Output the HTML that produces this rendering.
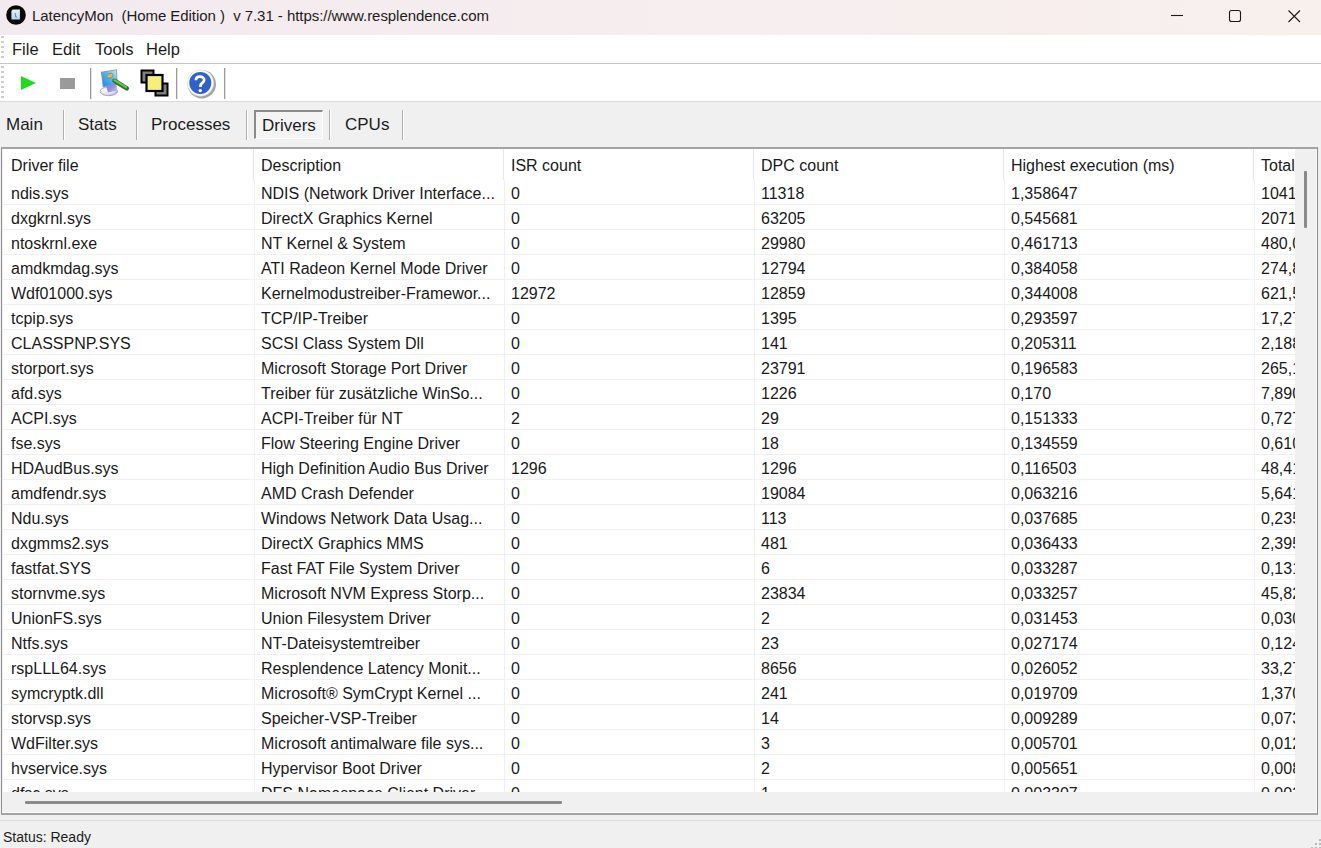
<!DOCTYPE html>
<html><head><meta charset="utf-8">
<style>
*{box-sizing:border-box}
html,body{margin:0;padding:0}
body{width:1321px;height:848px;overflow:hidden;position:relative;background:#f0f0f0;font-family:"Liberation Sans",sans-serif;color:#1a1a1a}
.abs{position:absolute}
#title{position:absolute;left:0;top:0;width:1321px;height:35px;background:linear-gradient(90deg,#f3eaf0 0%,#f6edef 45%,#f8f0ed 100%)}
#title .t{position:absolute;left:32px;top:6px;font-size:15px;line-height:20px;white-space:pre;color:#1c1c1c;letter-spacing:-0.05px}
#menu{position:absolute;left:0;top:35px;width:1321px;height:28px;background:#fff}
#menu span{position:absolute;top:4px;font-size:16.5px;line-height:20px;color:#1c1c1c}
#menuline{position:absolute;left:0;top:63px;width:1321px;height:1px;background:#c6c6c6}
#tool{position:absolute;left:0;top:64px;width:1321px;height:37px;background:#fff}
#toolline{position:absolute;left:0;top:101px;width:1321px;height:1px;background:#dadada}
.grip{position:absolute;left:1px;width:3px;height:2px;background:#cccccc}
.tsep{position:absolute;top:68px;width:2px;height:31px;background:#9c9c9c;border-right:1px solid #e0e0e0}
.tab{position:absolute;top:114px;font-size:17px;line-height:22px;color:#1c1c1c}
.tabsep{position:absolute;top:110px;width:2px;height:30px;background:#b0b0b0;border-right:1px solid #fff}
#frame{position:absolute;left:1px;top:147px;width:1317px;height:668px;border-left:1px solid #909090;border-top:2px solid #a4a4a4;border-right:1px solid #8c8c8c;border-bottom:2px solid #a4a4a8;background:#f0f0f0;box-shadow:inset -1px -1px 0 #fafafa}
#content{position:absolute;left:3px;top:149px;width:1292px;height:643px;overflow:hidden;background:#fff}
.hdr{position:absolute;left:0;top:0;width:1500px;height:31px}
.hc{position:absolute;top:4px;height:25px;padding-left:8px;font-size:16px;line-height:25px;white-space:pre}
.hsep{position:absolute;top:0;width:1px;height:31px;background:#e6e6e6}
.row{position:absolute;left:0;width:1500px;height:25px;border-bottom:1px solid #f0f0f0}
.c{position:absolute;top:2px;padding-left:8px;font-size:16px;line-height:24px;white-space:pre}
.csep{position:absolute;top:31px;width:1px;height:700px;background:#f0f0f0}
#vscroll{position:absolute;left:1295px;top:149px;width:21px;height:643px;background:#f0f0f0}
#vthumb{position:absolute;left:1304px;top:171px;width:3px;height:57px;background:#8a8a8a;border-radius:1px}
#hscroll{position:absolute;left:3px;top:792px;width:1313px;height:20px;background:#f0f0f0}
#hthumb{position:absolute;left:25px;top:801px;width:537px;height:3px;background:#8a8a8a;border-radius:1px}
#statline{position:absolute;left:0;top:820px;width:1321px;height:1px;background:#dcdcdc}
#status{position:absolute;left:3px;top:828px;font-size:14px;line-height:18px;color:#1c1c1c}
</style></head><body>
<div id="title">
  <svg class="abs" style="left:6px;top:5px" width="20" height="20" viewBox="0 0 20 20">
    <defs><linearGradient id="doc" x1="0" y1="0" x2="0" y2="1"><stop offset="0" stop-color="#e4f2f8"/><stop offset="1" stop-color="#b4d4ec"/></linearGradient></defs>
    <circle cx="10" cy="10" r="9.8" fill="#080808"/>
    <path d="M6.6 4.6 L13.9 4.6 L13.9 14.5 L5.4 14.5 L5.4 5.9 Z" fill="url(#doc)"/>
    <path d="M9.2 8 L9.6 11.8 L11 12" stroke="#4a5a6a" stroke-width="0.7" fill="none"/>
  </svg>
  <div class="t">LatencyMon  (Home Edition )  v 7.31 - https://www.resplendence.com</div>
  <svg class="abs" style="left:1160px;top:0" width="161" height="35" viewBox="0 0 161 35">
    <path d="M11 15.5 H23" stroke="#1a1a1a" stroke-width="1.1"/>
    <rect x="69.5" y="10.5" width="11" height="11" rx="2" ry="2" fill="none" stroke="#1a1a1a" stroke-width="1.1"/>
    <path d="M128.5 10.5 L140 22 M140 10.5 L128.5 22" stroke="#1a1a1a" stroke-width="1.1"/>
  </svg>
</div>
<div id="menu">
  <span style="left:12px">File</span>
  <span style="left:52px">Edit</span>
  <span style="left:95px">Tools</span>
  <span style="left:146px">Help</span>
</div>
<div id="menuline"></div>
<div id="tool"></div>
<div id="toolline"></div>
<!-- grips -->
<div class="grip" style="top:36px"></div><div class="grip" style="top:41px"></div><div class="grip" style="top:46px"></div><div class="grip" style="top:51px"></div><div class="grip" style="top:56px"></div>
<div class="grip" style="top:66px"></div><div class="grip" style="top:71px"></div><div class="grip" style="top:76px"></div><div class="grip" style="top:81px"></div><div class="grip" style="top:86px"></div><div class="grip" style="top:91px"></div><div class="grip" style="top:96px"></div>
<!-- toolbar icons -->
<svg class="abs" style="left:20px;top:75px" width="17" height="16" viewBox="0 0 17 16"><path d="M1 1 L16 8 L1 15 Z" fill="#20dc20"/></svg>
<div class="abs" style="left:60px;top:78px;width:15px;height:11px;background:#9a9a9a"></div>
<div class="tsep" style="left:90px"></div>
<svg class="abs" style="left:96px;top:64px" width="36" height="36" viewBox="0 0 36 36">
  <defs>
    <linearGradient id="scr" x1="0" y1="1" x2="1" y2="0"><stop offset="0" stop-color="#1e88e0"/><stop offset="0.55" stop-color="#56b4f0"/><stop offset="1" stop-color="#c8e6f8"/></linearGradient>
    <radialGradient id="base" cx="0.35" cy="0.35" r="0.75"><stop offset="0" stop-color="#ffffff"/><stop offset="0.6" stop-color="#e4e0f4"/><stop offset="1" stop-color="#b0acc8"/></radialGradient>
    <linearGradient id="neck" x1="0" y1="0" x2="1" y2="1"><stop offset="0" stop-color="#6a8ee0"/><stop offset="0.5" stop-color="#9a88dc"/><stop offset="1" stop-color="#c8c0ec"/></linearGradient>
    <linearGradient id="pen" x1="0" y1="0" x2="0" y2="1"><stop offset="0" stop-color="#7ccc5c"/><stop offset="1" stop-color="#2a7a2a"/></linearGradient>
  </defs>
  <ellipse cx="12.8" cy="27.3" rx="8.7" ry="4.4" fill="url(#base)" stroke="#9c9cb4" stroke-width="0.8"/>
  <path d="M9.5 20.5 L20.5 19 L20.8 26.5 L12 28.5 Z" fill="url(#neck)"/>
  <path d="M4.8 7.8 L21 5.2 L21.6 20.6 L6.8 23.2 Z" fill="#7c98c4"/>
  <path d="M5.8 8.6 L20.2 6.2 L20.7 19.8 L7.6 22.2 Z" fill="url(#scr)"/>
  <ellipse cx="13.9" cy="11.8" rx="3.4" ry="2.2" transform="rotate(-22 13.9 11.8)" fill="#dcbc50" stroke="#6a6040" stroke-width="0.5"/>
  <path d="M18.5 16.8 L30.8 24.4" stroke="#2a7a2a" stroke-width="4.6" stroke-linecap="round"/>
  <path d="M18.6 16.2 L30 23.2" stroke="#6cc050" stroke-width="2" stroke-linecap="round"/>
</svg>
<svg class="abs" style="left:140px;top:69px" width="30" height="29" viewBox="0 0 30 29">
  <rect x="1.5" y="1.5" width="12" height="12" fill="#808080" stroke="#000" stroke-width="2"/>
  <rect x="15.5" y="14.5" width="12" height="12" fill="#808080" stroke="#000" stroke-width="2"/>
  <rect x="6.5" y="6" width="16" height="16" fill="#f4f07a" stroke="#000" stroke-width="2.2"/>
</svg>
<div class="tsep" style="left:176px"></div>
<svg class="abs" style="left:182px;top:64px" width="36" height="36" viewBox="0 0 36 36">
  <circle cx="19.8" cy="20.2" r="14.2" fill="#7c7c7c" opacity="0.7"/>
  <circle cx="18.5" cy="19" r="13.2" fill="#fbfbff" stroke="#d4d8e4" stroke-width="0.6"/>
  <circle cx="18.3" cy="18.9" r="11" fill="#2f62c6"/>
  <path d="M13.9 16.2 C13.9 13.9 15.7 12.7 18 12.7 C20.6 12.7 22.2 14.3 22.2 16.1 C22.2 18.5 18.8 19.1 18.5 21.4 L18.5 22.9" fill="none" stroke="#fff" stroke-width="2.7"/>
  <circle cx="18.3" cy="26.6" r="1.7" fill="#fff"/>
</svg>
<div class="tsep" style="left:224px"></div>
<!-- tabs -->
<span class="tab" style="left:6px">Main</span>
<div class="tabsep" style="left:63px"></div>
<span class="tab" style="left:78px">Stats</span>
<div class="tabsep" style="left:136px"></div>
<span class="tab" style="left:151px">Processes</span>
<div class="tabsep" style="left:246px"></div>
<div class="abs" style="left:254px;top:110px;width:69px;height:29px;border-top:2px solid #8a8a8a;border-left:2px solid #8a8a8a;border-right:1px solid #fff;border-bottom:1px solid #fff;background:#f4f4f4"></div>
<span class="tab" style="left:262px;top:115px">Drivers</span>
<div class="tabsep" style="left:329px"></div>
<span class="tab" style="left:345px">CPUs</span>
<div class="tabsep" style="left:402px"></div>
<!-- frame -->
<div id="frame"></div>
<div id="content">
<div class="hdr">
<div class="hc" style="left:0px">Driver file</div>
<div class="hc" style="left:250px">Description</div>
<div class="hc" style="left:500px">ISR count</div>
<div class="hc" style="left:750px">DPC count</div>
<div class="hc" style="left:1000px">Highest execution (ms)</div>
<div class="hc" style="left:1250px">Total execution (ms)</div>
<div class="hsep" style="left:250px"></div>
<div class="hsep" style="left:500px"></div>
<div class="hsep" style="left:750px"></div>
<div class="hsep" style="left:1000px"></div>
<div class="hsep" style="left:1250px"></div>
</div>
<div class="row" style="top:31px">
<div class="c" style="left:0px">ndis.sys</div>
<div class="c" style="left:250px">NDIS (Network Driver Interface...</div>
<div class="c" style="left:500px">0</div>
<div class="c" style="left:750px">11318</div>
<div class="c" style="left:1000px">1,358647</div>
<div class="c" style="left:1250px">1041,337</div>
</div>
<div class="row" style="top:56px">
<div class="c" style="left:0px">dxgkrnl.sys</div>
<div class="c" style="left:250px">DirectX Graphics Kernel</div>
<div class="c" style="left:500px">0</div>
<div class="c" style="left:750px">63205</div>
<div class="c" style="left:1000px">0,545681</div>
<div class="c" style="left:1250px">2071,566</div>
</div>
<div class="row" style="top:81px">
<div class="c" style="left:0px">ntoskrnl.exe</div>
<div class="c" style="left:250px">NT Kernel &amp; System</div>
<div class="c" style="left:500px">0</div>
<div class="c" style="left:750px">29980</div>
<div class="c" style="left:1000px">0,461713</div>
<div class="c" style="left:1250px">480,0953</div>
</div>
<div class="row" style="top:106px">
<div class="c" style="left:0px">amdkmdag.sys</div>
<div class="c" style="left:250px">ATI Radeon Kernel Mode Driver</div>
<div class="c" style="left:500px">0</div>
<div class="c" style="left:750px">12794</div>
<div class="c" style="left:1000px">0,384058</div>
<div class="c" style="left:1250px">274,8325</div>
</div>
<div class="row" style="top:131px">
<div class="c" style="left:0px">Wdf01000.sys</div>
<div class="c" style="left:250px">Kernelmodustreiber-Framewor...</div>
<div class="c" style="left:500px">12972</div>
<div class="c" style="left:750px">12859</div>
<div class="c" style="left:1000px">0,344008</div>
<div class="c" style="left:1250px">621,5344</div>
</div>
<div class="row" style="top:156px">
<div class="c" style="left:0px">tcpip.sys</div>
<div class="c" style="left:250px">TCP/IP-Treiber</div>
<div class="c" style="left:500px">0</div>
<div class="c" style="left:750px">1395</div>
<div class="c" style="left:1000px">0,293597</div>
<div class="c" style="left:1250px">17,27836</div>
</div>
<div class="row" style="top:181px">
<div class="c" style="left:0px">CLASSPNP.SYS</div>
<div class="c" style="left:250px">SCSI Class System Dll</div>
<div class="c" style="left:500px">0</div>
<div class="c" style="left:750px">141</div>
<div class="c" style="left:1000px">0,205311</div>
<div class="c" style="left:1250px">2,188832</div>
</div>
<div class="row" style="top:206px">
<div class="c" style="left:0px">storport.sys</div>
<div class="c" style="left:250px">Microsoft Storage Port Driver</div>
<div class="c" style="left:500px">0</div>
<div class="c" style="left:750px">23791</div>
<div class="c" style="left:1000px">0,196583</div>
<div class="c" style="left:1250px">265,1735</div>
</div>
<div class="row" style="top:231px">
<div class="c" style="left:0px">afd.sys</div>
<div class="c" style="left:250px">Treiber für zusätzliche WinSo...</div>
<div class="c" style="left:500px">0</div>
<div class="c" style="left:750px">1226</div>
<div class="c" style="left:1000px">0,170</div>
<div class="c" style="left:1250px">7,890966</div>
</div>
<div class="row" style="top:256px">
<div class="c" style="left:0px">ACPI.sys</div>
<div class="c" style="left:250px">ACPI-Treiber für NT</div>
<div class="c" style="left:500px">2</div>
<div class="c" style="left:750px">29</div>
<div class="c" style="left:1000px">0,151333</div>
<div class="c" style="left:1250px">0,727711</div>
</div>
<div class="row" style="top:281px">
<div class="c" style="left:0px">fse.sys</div>
<div class="c" style="left:250px">Flow Steering Engine Driver</div>
<div class="c" style="left:500px">0</div>
<div class="c" style="left:750px">18</div>
<div class="c" style="left:1000px">0,134559</div>
<div class="c" style="left:1250px">0,610025</div>
</div>
<div class="row" style="top:306px">
<div class="c" style="left:0px">HDAudBus.sys</div>
<div class="c" style="left:250px">High Definition Audio Bus Driver</div>
<div class="c" style="left:500px">1296</div>
<div class="c" style="left:750px">1296</div>
<div class="c" style="left:1000px">0,116503</div>
<div class="c" style="left:1250px">48,41373</div>
</div>
<div class="row" style="top:331px">
<div class="c" style="left:0px">amdfendr.sys</div>
<div class="c" style="left:250px">AMD Crash Defender</div>
<div class="c" style="left:500px">0</div>
<div class="c" style="left:750px">19084</div>
<div class="c" style="left:1000px">0,063216</div>
<div class="c" style="left:1250px">5,641716</div>
</div>
<div class="row" style="top:356px">
<div class="c" style="left:0px">Ndu.sys</div>
<div class="c" style="left:250px">Windows Network Data Usag...</div>
<div class="c" style="left:500px">0</div>
<div class="c" style="left:750px">113</div>
<div class="c" style="left:1000px">0,037685</div>
<div class="c" style="left:1250px">0,235903</div>
</div>
<div class="row" style="top:381px">
<div class="c" style="left:0px">dxgmms2.sys</div>
<div class="c" style="left:250px">DirectX Graphics MMS</div>
<div class="c" style="left:500px">0</div>
<div class="c" style="left:750px">481</div>
<div class="c" style="left:1000px">0,036433</div>
<div class="c" style="left:1250px">2,395593</div>
</div>
<div class="row" style="top:406px">
<div class="c" style="left:0px">fastfat.SYS</div>
<div class="c" style="left:250px">Fast FAT File System Driver</div>
<div class="c" style="left:500px">0</div>
<div class="c" style="left:750px">6</div>
<div class="c" style="left:1000px">0,033287</div>
<div class="c" style="left:1250px">0,131154</div>
</div>
<div class="row" style="top:431px">
<div class="c" style="left:0px">stornvme.sys</div>
<div class="c" style="left:250px">Microsoft NVM Express Storp...</div>
<div class="c" style="left:500px">0</div>
<div class="c" style="left:750px">23834</div>
<div class="c" style="left:1000px">0,033257</div>
<div class="c" style="left:1250px">45,82744</div>
</div>
<div class="row" style="top:456px">
<div class="c" style="left:0px">UnionFS.sys</div>
<div class="c" style="left:250px">Union Filesystem Driver</div>
<div class="c" style="left:500px">0</div>
<div class="c" style="left:750px">2</div>
<div class="c" style="left:1000px">0,031453</div>
<div class="c" style="left:1250px">0,030905</div>
</div>
<div class="row" style="top:481px">
<div class="c" style="left:0px">Ntfs.sys</div>
<div class="c" style="left:250px">NT-Dateisystemtreiber</div>
<div class="c" style="left:500px">0</div>
<div class="c" style="left:750px">23</div>
<div class="c" style="left:1000px">0,027174</div>
<div class="c" style="left:1250px">0,124578</div>
</div>
<div class="row" style="top:506px">
<div class="c" style="left:0px">rspLLL64.sys</div>
<div class="c" style="left:250px">Resplendence Latency Monit...</div>
<div class="c" style="left:500px">0</div>
<div class="c" style="left:750px">8656</div>
<div class="c" style="left:1000px">0,026052</div>
<div class="c" style="left:1250px">33,27516</div>
</div>
<div class="row" style="top:531px">
<div class="c" style="left:0px">symcryptk.dll</div>
<div class="c" style="left:250px">Microsoft® SymCrypt Kernel ...</div>
<div class="c" style="left:500px">0</div>
<div class="c" style="left:750px">241</div>
<div class="c" style="left:1000px">0,019709</div>
<div class="c" style="left:1250px">1,370882</div>
</div>
<div class="row" style="top:556px">
<div class="c" style="left:0px">storvsp.sys</div>
<div class="c" style="left:250px">Speicher-VSP-Treiber</div>
<div class="c" style="left:500px">0</div>
<div class="c" style="left:750px">14</div>
<div class="c" style="left:1000px">0,009289</div>
<div class="c" style="left:1250px">0,073127</div>
</div>
<div class="row" style="top:581px">
<div class="c" style="left:0px">WdFilter.sys</div>
<div class="c" style="left:250px">Microsoft antimalware file sys...</div>
<div class="c" style="left:500px">0</div>
<div class="c" style="left:750px">3</div>
<div class="c" style="left:1000px">0,005701</div>
<div class="c" style="left:1250px">0,012703</div>
</div>
<div class="row" style="top:606px">
<div class="c" style="left:0px">hvservice.sys</div>
<div class="c" style="left:250px">Hypervisor Boot Driver</div>
<div class="c" style="left:500px">0</div>
<div class="c" style="left:750px">2</div>
<div class="c" style="left:1000px">0,005651</div>
<div class="c" style="left:1250px">0,008361</div>
</div>
<div class="row" style="top:631px">
<div class="c" style="left:0px">dfsc.sys</div>
<div class="c" style="left:250px">DFS Namespace Client Driver</div>
<div class="c" style="left:500px">0</div>
<div class="c" style="left:750px">1</div>
<div class="c" style="left:1000px">0,003307</div>
<div class="c" style="left:1250px">0,003307</div>
</div>
<div class="csep" style="left:251px"></div>
<div class="csep" style="left:501px"></div>
<div class="csep" style="left:751px"></div>
<div class="csep" style="left:1001px"></div>
<div class="csep" style="left:1251px"></div>
</div>
<div id="vscroll"></div>
<div id="vthumb"></div>
<div id="hscroll"></div>
<div id="hthumb"></div>
<div id="statline"></div>
<div id="status">Status: Ready</div>
<svg class="abs" style="left:1310px;top:838px" width="12" height="12" viewBox="0 0 12 12">
  <rect x="9" y="1" width="2" height="2" fill="#b8b8b8"/>
  <rect x="5" y="5" width="2" height="2" fill="#b8b8b8"/><rect x="9" y="5" width="2" height="2" fill="#b8b8b8"/>
  <rect x="1" y="9" width="2" height="2" fill="#b8b8b8"/><rect x="5" y="9" width="2" height="2" fill="#b8b8b8"/><rect x="9" y="9" width="2" height="2" fill="#b8b8b8"/>
</svg>
</body></html>
